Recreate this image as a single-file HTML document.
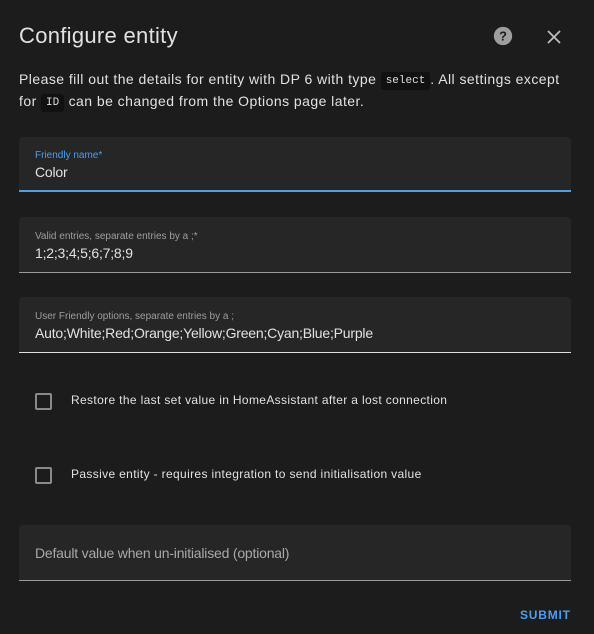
<!DOCTYPE html>
<html><head><style>
body{margin:0;width:594px;height:634px;background:#1c1c1c;font-family:"Liberation Sans",sans-serif;color:#e1e1e1;position:relative;overflow:hidden}
.a{position:absolute;white-space:nowrap}
.f{position:absolute;left:19px;width:552px;background:#262626;border-radius:4px 4px 0 0;border-bottom:1px solid #9a9a9a;box-sizing:border-box}
.lbl{position:absolute;left:16px;font-size:10px;color:#9e9e9e}
.val{position:absolute;left:16px;font-size:14px;color:#e1e1e1;letter-spacing:-0.2px}
code{font-family:"Liberation Mono",monospace;font-size:11px;background:#111;padding:2px 5px;border-radius:3px;color:#ddd;letter-spacing:0;display:inline-block;line-height:14px;vertical-align:1px}
.cb{position:absolute;left:35px;width:13px;height:13px;border:2px solid #8a8a8a;border-radius:2px}
</style></head><body>
<div class="a" style="left:19px;top:23px;font-size:22px;color:#e1e1e1;letter-spacing:0.3px">Configure entity</div>
<svg class="a" style="left:492px;top:25px" width="22" height="22" viewBox="0 0 24 24"><circle cx="12" cy="12" r="10" fill="#9e9e9e"/><text x="12" y="17" text-anchor="middle" font-size="14" font-weight="bold" fill="#1c1c1c" font-family="Liberation Sans">?</text></svg>
<svg class="a" style="left:546px;top:29px" width="16" height="16" viewBox="0 0 16 16"><path d="M2 2L14 14M14 2L2 14" stroke="#bdbdbd" stroke-width="1.8"/></svg>
<div class="a" style="left:19px;top:68px;font-size:14px;line-height:22px;color:#e1e1e1;letter-spacing:0.45px">Please fill out the details for entity with DP 6 with type <code>select</code>. All settings except<br>for <code>ID</code> can be changed from the Options page later.</div>
<div class="f" style="top:137px;height:55px;border-bottom:2px solid #4a9ff0"><div class="lbl" style="top:13px;color:#4a9ff0">Friendly name*</div><div class="val" style="top:27px">Color</div></div>
<div class="f" style="top:217px;height:56px"><div class="lbl" style="top:14px">Valid entries, separate entries by a ;*</div><div class="val" style="top:28px">1;2;3;4;5;6;7;8;9</div></div>
<div class="f" style="top:297px;height:56px;border-bottom-color:#e0e0e0"><div class="lbl" style="top:14px">User Friendly options, separate entries by a ;</div><div class="val" style="top:28px">Auto;White;Red;Orange;Yellow;Green;Cyan;Blue;Purple</div></div>
<div class="cb" style="top:393px"></div>
<div class="a" style="left:71px;top:393px;font-size:12px;letter-spacing:0.35px">Restore the last set value in HomeAssistant after a lost connection</div>
<div class="cb" style="top:467px"></div>
<div class="a" style="left:71px;top:467px;font-size:12px;letter-spacing:0.35px">Passive entity - requires integration to send initialisation value</div>
<div class="f" style="top:525px;height:56px"><div class="val" style="top:20px;color:#a8a8a8">Default value when un-initialised (optional)</div></div>
<div class="a" style="left:520px;top:608px;font-size:12px;color:#4a9ff0;letter-spacing:0.8px;font-weight:bold">SUBMIT</div>
</body></html>
